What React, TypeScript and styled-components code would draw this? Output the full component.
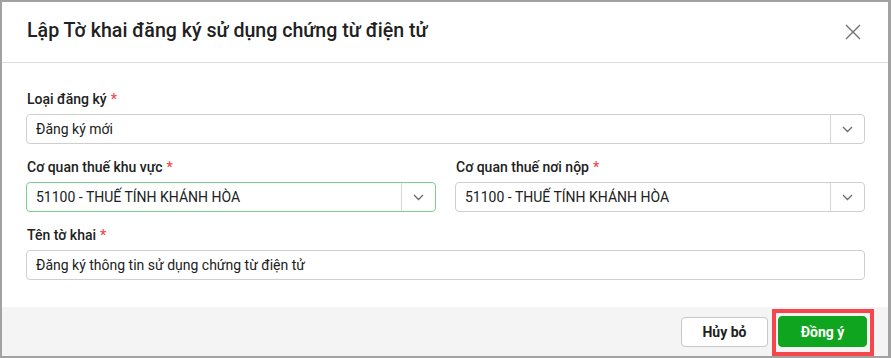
import React from "react";
import styled, { createGlobalStyle } from "styled-components";

const Global = createGlobalStyle`
  html, body { margin: 0; padding: 0; }
  body {
    background: #a2a2a2;
    font-family: Roboto, "Noto Sans", Arial, sans-serif;
    color: #212121;
    width: 891px;
    height: 358px;
    overflow: hidden;
  }
  * { box-sizing: border-box; }
`;

const Dialog = styled.div`
  margin: 2px 3px 2px 2px;
  height: 354px;
  background: #fff;
  display: flex;
  flex-direction: column;
`;

const Header = styled.div`
  height: 61px;
  border-bottom: 1px solid #dedede;
  display: flex;
  align-items: center;
  justify-content: space-between;
  padding: 0 27px 0 25px;
`;

const Title = styled.h1`
  margin: 0;
  font-size: 19.6px;
  line-height: 24px;
  font-weight: 500;
  color: #212121;
  padding-bottom: 2px;
`;

const CloseBtn = styled.button`
  border: 0;
  background: transparent;
  padding: 0;
  width: 16px;
  height: 16px;
  display: flex;
  align-items: center;
  justify-content: center;
  cursor: pointer;
`;

const Body = styled.div`
  flex: 1;
  padding: 26px 23px 0 24px;
`;

const Row = styled.div`
  display: grid;
  grid-template-columns: 1fr 1fr;
  column-gap: 19px;
`;

const Field = styled.div`
  margin-bottom: 13px;
`;

const Label = styled.div`
  font-size: 14px;
  line-height: 20px;
  font-weight: 500;
  margin-bottom: 5px;
  padding-left: 1px;
`;

const Req = styled.span`
  color: #f0484e;
  margin-left: 4px;
`;

const Box = styled.div<{ $focus?: boolean }>`
  height: 30px;
  border: 1px solid ${(p) => (p.$focus ? "#78d28f" : "#cfcfcf")};
  border-radius: 4px;
  display: flex;
  align-items: stretch;
  background: #fff;
`;

const Value = styled.div`
  flex: 1;
  display: flex;
  align-items: center;
  padding-left: 9px;
  font-size: 14px;
  color: #212121;
  white-space: nowrap;
  overflow: hidden;
`;

const Arrow = styled.div`
  width: 34px;
  border-left: 1px solid #d6d6d6;
  display: flex;
  align-items: center;
  justify-content: center;
`;

const Footer = styled.div`
  height: 49px;
  background: #f4f4f4;
  display: flex;
  align-items: center;
  justify-content: flex-end;
  gap: 10px;
  padding: 0 21px 0 0;
`;

const Btn = styled.button<{ $primary?: boolean }>`
  height: ${(p) => (p.$primary ? "31px" : "30px")};
  width: ${(p) => (p.$primary ? "89px" : "87px")};
  border-radius: 4px;
  border: 1px solid ${(p) => (p.$primary ? "#10a51e" : "#c8c8c8")};
  background: ${(p) => (p.$primary ? "#10a51e" : "#fff")};
  color: ${(p) => (p.$primary ? "#fff" : "#212121")};
  font-family: Roboto, Arial, sans-serif;
  font-size: 14px;
  font-weight: 700;
  padding: 0;
  cursor: pointer;
`;

const Highlight = styled.div`
  position: relative;
  display: flex;
`;

const RedFrame = styled.div`
  position: absolute;
  left: -6px;
  right: -7px;
  top: -7px;
  bottom: -9px;
  border: 4px solid #f5464b;
  pointer-events: none;
`;

const Chevron = () => (
  <svg width="11" height="7" viewBox="0 0 11 7" fill="none">
    <path d="M1 1l4.5 4.5L10 1" stroke="#6b6b6b" strokeWidth="1.3" />
  </svg>
);

const Select = ({ value, focus }: { value: string; focus?: boolean }) => (
  <Box $focus={focus}>
    <Value>{value}</Value>
    <Arrow>
      <Chevron />
    </Arrow>
  </Box>
);

export default function App() {
  return (
    <>
      <Global />
      <Dialog>
        <Header>
          <Title>Lập Tờ khai đăng ký sử dụng chứng từ điện tử</Title>
          <CloseBtn aria-label="Đóng">
            <svg width="16" height="16" viewBox="0 0 16 16">
              <path d="M1 1l14 14M15 1L1 15" stroke="#727272" strokeWidth="1.4" />
            </svg>
          </CloseBtn>
        </Header>
        <Body>
          <Field>
            <Label>
              Loại đăng ký<Req>*</Req>
            </Label>
            <Select value="Đăng ký mới" />
          </Field>
          <Row>
            <Field>
              <Label>
                Cơ quan thuế khu vực<Req>*</Req>
              </Label>
              <Select value="51100 - THUẾ TÍNH KHÁNH HÒA" focus />
            </Field>
            <Field>
              <Label>
                Cơ quan thuế nơi nộp<Req>*</Req>
              </Label>
              <Select value="51100 - THUẾ TÍNH KHÁNH HÒA" />
            </Field>
          </Row>
          <Field>
            <Label>
              Tên tờ khai<Req>*</Req>
            </Label>
            <Box>
              <Value>Đăng ký thông tin sử dụng chứng từ điện tử</Value>
            </Box>
          </Field>
        </Body>
        <Footer>
          <Btn>Hủy bỏ</Btn>
          <Highlight>
            <Btn $primary>Đồng ý</Btn>
            <RedFrame />
          </Highlight>
        </Footer>
      </Dialog>
    </>
  );
}
